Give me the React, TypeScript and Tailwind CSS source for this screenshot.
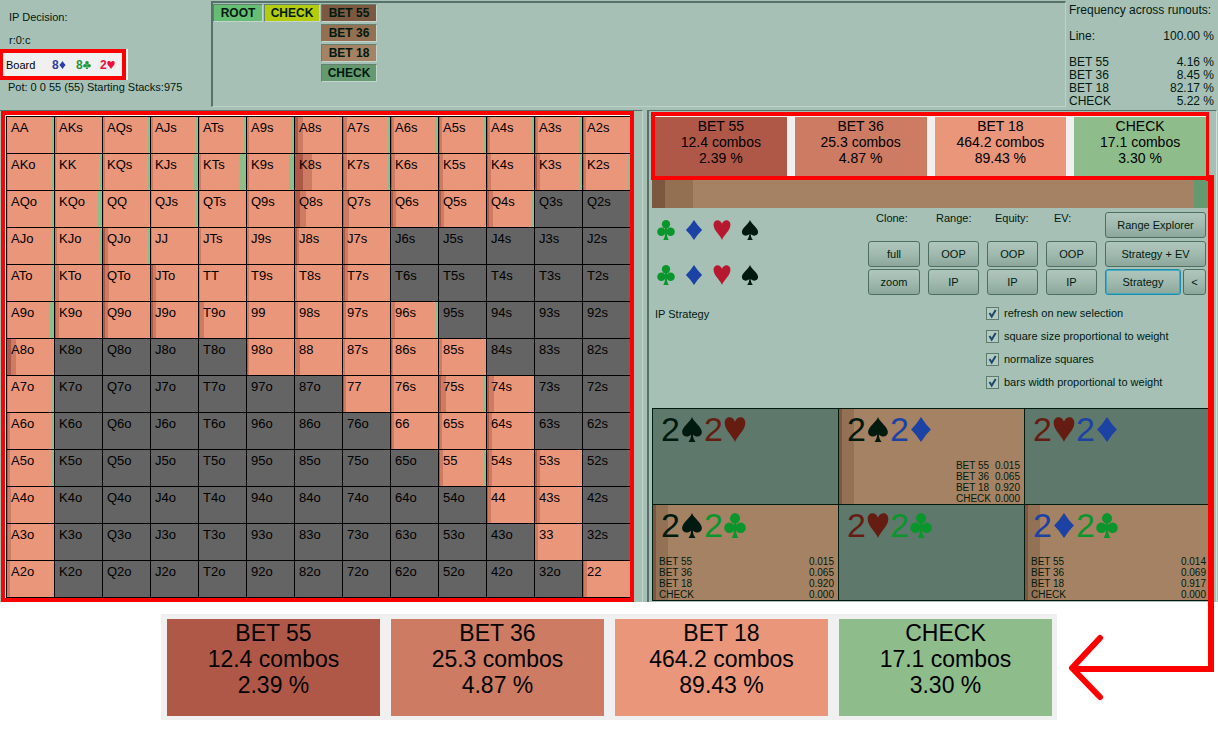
import React from "react";

type Suit = "s" | "h" | "d" | "c";
/** Bar widths in 47ths of a cell: bet 55, bet 36, check. The rest is bet 18. */
type Mix = [number, number, number];

const RANKS = ["A", "K", "Q", "J", "T", "9", "8", "7", "6", "5", "4", "3", "2"];

const MIXES: Record<string, Mix> = {
  AA: [0, 0, 2], AKs: [0, 2, 1], AQs: [0, 2, 2], AJs: [0, 2, 2], ATs: [0, 1, 2], A9s: [0, 2, 3], A8s: [3, 5, 0],
  A7s: [1, 3, 2], A6s: [1, 2, 3], A5s: [1, 2, 2], A4s: [1, 2, 2], A3s: [1, 2, 3], A2s: [1, 2, 0],
  AKo: [0, 1, 2], KK: [0, 1, 2], KQs: [0, 2, 2], KJs: [0, 2, 4], KTs: [0, 2, 6], K9s: [0, 2, 5], K8s: [8, 9, 0],
  K7s: [1, 3, 2], K6s: [1, 3, 1], K5s: [1, 3, 1], K4s: [1, 3, 0], K3s: [2, 3, 2], K2s: [1, 2, 2],
  AQo: [0, 1, 2], KQo: [0, 1, 4], QQ: [0, 1, 0], QJs: [0, 1, 2], QTs: [0, 1, 1], Q9s: [0, 2, 0], Q8s: [5, 6, 0],
  Q7s: [1, 5, 0], Q6s: [2, 3, 1], Q5s: [2, 3, 1], Q4s: [2, 4, 2],
  AJo: [0, 1, 2], KJo: [0, 2, 2], QJo: [2, 3, 2], JJ: [0, 1, 0], JTs: [0, 2, 1], J9s: [0, 2, 0], J8s: [2, 2, 0], J7s: [2, 3, 0],
  ATo: [0, 1, 2], KTo: [0, 4, 1], QTo: [2, 4, 0], JTo: [2, 3, 0], TT: [0, 1, 0], T9s: [0, 2, 1], T8s: [0, 2, 0], T7s: [2, 3, 1],
  A9o: [0, 1, 4], K9o: [1, 3, 1], Q9o: [2, 3, 0], J9o: [2, 3, 0], T9o: [1, 4, 0], "99": [0, 2, 0], "98s": [1, 2, 0],
  "97s": [1, 2, 1], "96s": [0, 4, 2],
  A8o: [4, 5, 0], "98o": [1, 1, 0], "88": [0, 5, 0], "87s": [0, 2, 0], "86s": [1, 1, 0], "85s": [0, 3, 0],
  A7o: [0, 1, 2], "77": [1, 2, 0], "76s": [1, 2, 0], "75s": [2, 5, 3], "74s": [2, 5, 1],
  A6o: [1, 2, 2], "66": [1, 2, 1], "65s": [1, 2, 1], "64s": [2, 3, 1],
  A5o: [1, 2, 2], "55": [1, 3, 2], "54s": [2, 3, 1], "53s": [2, 3, 0],
  A4o: [1, 3, 1], "44": [1, 3, 1], "43s": [2, 3, 0],
  A3o: [1, 3, 1], "33": [0, 3, 1],
  A2o: [0, 3, 1], "22": [1, 3, 0],
};

function handName(row: number, col: number) {
  if (row === col) return RANKS[row] + RANKS[row];
  return row < col ? RANKS[row] + RANKS[col] + "s" : RANKS[col] + RANKS[row] + "o";
}

function mixBackground([a, b, c]: Mix) {
  const p = (n: number) => `${((n / 47) * 100).toFixed(2)}%`;
  return `linear-gradient(to right, #b05848 ${p(a)}, #cd7b62 ${p(a)} ${p(a + b)}, #e9967a ${p(a + b)} ${p(47 - c)}, #8fbc8b ${p(47 - c)})`;
}

function SuitIcon({ suit, className }: { suit: Suit; className: string }) {
  return (
    <svg viewBox="0 0 20 22" preserveAspectRatio="none" fill="currentColor" className={className} aria-hidden="true">
      {suit === "s" && (
        <path d="M10 0C8.5 4.5 1 8.6 1 13.3c0 4 5 5.4 8.2 2.2-.1 2.8-.9 4.8-2.4 6.5h6.4c-1.5-1.7-2.3-3.7-2.4-6.5 3.200 3.200 8.200 1.800 8.200-2.200C19 8.600 11.500 4.500 10 0Z" />
      )}
      {suit === "h" && <path d="M10 22C8.500 17 .6 11.500.6 5.200.6-.8 8-1.600 10 4.200 12-1.600 19.400-.8 19.400 5.200 19.400 11.500 11.500 17 10 22Z" />}
      {suit === "d" && <path d="M10 0Q13.800 6 19 11 13.800 16 10 22 6.200 16 1 11 6.200 6 10 0Z" />}
      {suit === "c" && (
        <>
          <circle cx="10" cy="4.700" r="4.600" />
          <circle cx="4.900" cy="13" r="4.700" />
          <circle cx="15.100" cy="13" r="4.700" />
          <path d="M9 7h2l.2 5h1v2h-1.300c.1 3.300.8 5.800 2.200 8H6.900c1.400-2.200 2.100-4.700 2.200-8H7.800v-2h1Z" />
        </>
      )}
    </svg>
  );
}

const ACTIONS = [
  { name: "BET 55", combos: "12.4 combos", share: "2.39 %", color: "bg-[#b05848]" },
  { name: "BET 36", combos: "25.3 combos", share: "4.87 %", color: "bg-[#cd7b62]" },
  { name: "BET 18", combos: "464.2 combos", share: "89.43 %", color: "bg-[#e9967a]" },
  { name: "CHECK", combos: "17.1 combos", share: "3.30 %", color: "bg-[#8fbc8b]" },
];

function ActionCards({ card }: { card: string }) {
  return (
    <>
      {ACTIONS.map((a) => (
        <div key={a.name} className={`flex-1 text-center whitespace-nowrap text-black ${a.color} ${card}`}>
          <div>{a.name}</div>
          <div>{a.combos}</div>
          <div>{a.share}</div>
        </div>
      ))}
    </>
  );
}

function NodeButton({ label, color, width }: { label: string; color: string; width: string }) {
  return (
    <button
      type="button"
      className={`h-[18px] border border-t-[#64806f] border-l-[#64806f] border-r-[#c3d6cd] border-b-[#c3d6cd] text-xs leading-4 font-bold text-[#001a10] ${color} ${width}`}
    >
      {label}
    </button>
  );
}

function PushButton({ label, width, active }: { label: string; width: string; active?: boolean }) {
  return (
    <button
      type="button"
      className={`h-[26px] rounded-[3px] border bg-linear-to-b from-[#afc6bc] from-0% via-[#9fb8ad] via-55% to-[#8da69b] ${
        active ? "border-[#1b8fae] ring-1 ring-[#4aa9bd] ring-inset" : "border-[#4f6e62]"
      } ${width}`}
    >
      {label}
    </button>
  );
}

const FREQUENCIES = [
  ["Line:", "100.00 %"],
  ["BET 55", "4.16 %"],
  ["BET 36", "8.45 %"],
  ["BET 18", "82.17 %"],
  ["CHECK", "5.22 %"],
];

function Header() {
  return (
    <header className="flex h-[110px] pt-px">
      <div className="w-[211px] shrink-0 text-[11px] leading-4">
        <p className="pt-2 pl-[9px]">IP Decision:</p>
        <p className="pt-[7px] pl-[9px]">r:0:c</p>
        <div className="mt-px w-32 bg-[#f0f0f0]">
          <div className="flex h-[31px] w-[126px] items-center border-4 border-l-3 border-[#ff0000] bg-[#f0f0f0] pl-[3px] text-black">
            <span className="w-[46px]">Board</span>
            <span className="flex w-6 items-center text-xs font-bold text-[#2f3fa0]">
              8<SuitIcon suit="d" className="h-2 w-[7px]" />
            </span>
            <span className="flex w-6 items-center text-xs font-bold text-[#1c9a3c]">
              8<SuitIcon suit="c" className="h-2 w-2" />
            </span>
            <span className="flex items-center text-xs font-bold text-[#f0103c]">
              2<SuitIcon suit="h" className="h-2 w-2" />
            </span>
          </div>
        </div>
        <p className="pl-2 leading-[14px] whitespace-nowrap">Pot: 0 0 55 (55) Starting Stacks:975</p>
      </div>

      <nav className="mb-[3px] flex min-w-0 flex-1 items-start gap-px border border-t-2 border-l-2 border-t-[#56726a] border-l-[#56726a] border-r-[#bdd1c8] border-b-[#bdd1c8] pt-px">
        <NodeButton label="ROOT" color="bg-[#65be74]" width="w-[50px]" />
        <NodeButton label="CHECK" color="bg-[#b5cb0f]" width="w-14" />
        <div className="flex flex-col gap-0.5">
          <NodeButton label="BET 55" color="bg-[#7d5841]" width="w-14" />
          <NodeButton label="BET 36" color="bg-[#937052]" width="w-14" />
          <NodeButton label="BET 18" color="bg-[#a58263]" width="w-14" />
          <NodeButton label="CHECK" color="bg-[#659a70]" width="w-14" />
        </div>
      </nav>

      <table className="mt-[3px] mr-1 ml-[3px] w-[145px] shrink-0 self-start text-xs leading-[13px]">
        <caption className="pb-[13px] text-left whitespace-nowrap">Frequency across runouts:</caption>
        <tbody>
          {FREQUENCIES.map(([label, value], i) => (
            <tr key={label}>
              <th scope="row" className={`p-0 text-left font-normal ${i === 0 ? "pb-[13px]" : ""}`}>{label}</th>
              <td className={`p-0 text-right ${i === 0 ? "pb-[13px]" : ""}`}>{value}</td>
            </tr>
          ))}
        </tbody>
      </table>
    </header>
  );
}

function HandMatrix() {
  return (
    <div className="border-4 border-[#ff0000] bg-white pt-px pl-px">
      <table className="w-full table-fixed border-separate border-spacing-0 border-b border-black text-[13px] leading-4 text-black">
        <tbody>
          {RANKS.map((rank, row) => (
            <tr key={rank}>
              {RANKS.map((_, col) => {
                const hand = handName(row, col);
                const mix = MIXES[hand];
                return (
                  <td
                    key={hand}
                    className="h-[37px] border-t border-l border-black bg-[#646464] bg-origin-padding p-0 pt-[3px] pl-1 align-top"
                    style={mix ? { backgroundImage: mixBackground(mix) } : undefined}
                  >
                    {hand}
                  </td>
                );
              })}
            </tr>
          ))}
        </tbody>
      </table>
    </div>
  );
}

const SUIT_COLORS: Record<Suit, string> = {
  c: "text-[#0a962c]",
  d: "text-[#1c42a4]",
  h: "text-[#b5182f]",
  s: "text-[#001a10]",
};

const CARD_COLORS: Record<Suit, string> = { ...SUIT_COLORS, h: "text-[#651d12]" };

function SuitRow() {
  return (
    <div className="flex gap-2.5">
      {(["c", "d", "h", "s"] as Suit[]).map((s) => (
        <button key={s} type="button" aria-label={s} className={SUIT_COLORS[s]}>
          <SuitIcon suit={s} className="block h-5 w-[18px]" />
        </button>
      ))}
    </div>
  );
}

function CheckOption({ label }: { label: string }) {
  return (
    <label className="flex h-[23px] items-center gap-[5px]">
      <span className="relative flex">
        <input type="checkbox" defaultChecked className="peer size-[13px] appearance-none border border-[#5d7a6e] bg-[#b3cac0]" />
        <svg viewBox="0 0 13 13" className="pointer-events-none absolute inset-0 hidden peer-checked:block" fill="none" stroke="#1d4a6b" strokeWidth="2">
          <path d="M3.500 6 5.700 9.500 9.700 3" />
        </svg>
      </span>
      {label}
    </label>
  );
}

function CloneColumn({ title, buttons, width }: { title: string; buttons: string[]; width: string }) {
  return (
    <div className={width}>
      <div className="h-[29px] pl-2 leading-3">{title}</div>
      <div className="flex flex-col gap-0.5">
        {buttons.map((b) => (
          <PushButton key={b} label={b} width="w-full" />
        ))}
      </div>
    </div>
  );
}

function Controls() {
  return (
    <div className="ml-px flex justify-between pt-1 pr-1 pb-3.5 text-[11px]">
      <div className="pl-[3px]">
        <div className="flex flex-col gap-[25px] pt-2 pl-0.5">
          <SuitRow />
          <SuitRow />
        </div>
        <p className="pt-[21px] leading-4">IP Strategy</p>
      </div>
      <div>
        <div className="flex gap-2">
          <CloneColumn title="Clone:" buttons={["full", "zoom"]} width="w-[52px]" />
          <CloneColumn title="Range:" buttons={["OOP", "IP"]} width="w-[51px]" />
          <CloneColumn title="Equity:" buttons={["OOP", "IP"]} width="w-[51px]" />
          <CloneColumn title="EV:" buttons={["OOP", "IP"]} width="w-[51px]" />
          <div className="flex w-[101px] flex-col">
            <PushButton label="Range Explorer" width="mb-[3px] w-full" />
            <PushButton label="Strategy + EV" width="mb-0.5 w-full" />
            <div className="flex gap-0.5">
              <PushButton label="Strategy" width="w-[76px]" active />
              <PushButton label="<" width="flex-1" />
            </div>
          </div>
        </div>
        <div className="flex flex-col pt-[7px] pl-[118px]">
          <CheckOption label="refresh on new selection" />
          <CheckOption label="square size proportional to weight" />
          <CheckOption label="normalize squares" />
          <CheckOption label="bars width proportional to weight" />
        </div>
      </div>
    </div>
  );
}

const COMBOS: { suits: [Suit, Suit]; values?: string[]; compact?: boolean }[] = [
  { suits: ["s", "h"] },
  { suits: ["s", "d"], values: ["0.015", "0.065", "0.920", "0.000"], compact: true },
  { suits: ["h", "d"] },
  { suits: ["s", "c"], values: ["0.015", "0.065", "0.920", "0.000"] },
  { suits: ["h", "c"] },
  { suits: ["d", "c"], values: ["0.014", "0.069", "0.917", "0.000"] },
];

function ComboGrid() {
  return (
    <div className="ml-px grid grid-cols-3 border-b border-[#001a10]">
      {COMBOS.map(({ suits, values, compact }) => (
        <div
          key={suits.join("")}
          className={`flex h-24 flex-col justify-between border-t border-l border-[#001a10] pr-1 ${
            values
              ? "bg-[linear-gradient(to_right,#7d5841_3px,#937155_3px_15px,#a58263_15px)]"
              : "bg-[#5f786c]"
          }`}
        >
          <div className="flex items-center gap-px pt-0.5 pl-2 text-[34px] leading-9">
            {suits.map((s) => (
              <span key={s} className={`flex items-center gap-px ${CARD_COLORS[s]}`}>
                2<SuitIcon suit={s} className="h-[25px] w-[22px]" />
              </span>
            ))}
          </div>
          {values && (
            <table className={`text-[10px] leading-[11px] text-[#001a10] ${compact ? "self-end" : "ml-1.5 self-stretch"}`}>
              <tbody>
                {values.map((v, i) => (
                  <tr key={ACTIONS[i].name}>
                    <th scope="row" className="p-0 text-left font-normal">{ACTIONS[i].name}</th>
                    <td className="p-0 pl-1 text-right">{v}</td>
                  </tr>
                ))}
              </tbody>
            </table>
          )}
        </div>
      ))}
    </div>
  );
}

function CalloutArrow() {
  return (
    <svg
      className="pointer-events-none absolute top-[170px] right-0 h-[540px] w-[154px]"
      viewBox="0 0 154 540"
      fill="none"
      stroke="#ff0000"
      aria-hidden="true"
    >
      <path d="M142 8h5v491H10" strokeWidth="6" />
      <path d="M36 468 8 498l28 29" strokeWidth="6" strokeLinecap="round" strokeLinejoin="round" />
    </svg>
  );
}

export default function App() {
  return (
    <div className="relative min-h-screen bg-white font-['Liberation_Sans',Arial,sans-serif] text-[#001a10]">
      <div className="bg-[#a7c0b6]">
        <Header />
        <main className="grid grid-cols-[643fr_570fr] gap-1 pr-px">
          <section className="border-t border-r border-t-[#56726a] border-r-[#c3d6cd] pr-2 pl-px">
            <HandMatrix />
          </section>
          <section className="border-t border-r border-l-2 border-t-[#56726a] border-r-[#d3e2da] border-l-[#56726a] pt-px pr-1.5 pl-0.5">
            <div className="mr-px flex gap-2 border-4 border-r-3 border-[#ff0000] bg-[#f0f0f0] pt-px text-sm leading-4">
              <ActionCards card="h-[59px] pt-px" />
            </div>
            <div className="ml-px flex h-7 bg-[#a58263]">
              <div className="w-[13px] bg-[#7d5841]" />
              <div className="w-7 bg-[#937052]" />
              <div className="ml-auto w-4 bg-[#659a70]" />
            </div>
            <Controls />
            <ComboGrid />
          </section>
        </main>
      </div>
      <div className="mt-3 mr-[161px] ml-[161px] flex gap-[11px] bg-[#f0f0f0] pt-[5px] pr-[5px] pb-1 pl-1.5 text-[23px] leading-[26px]">
        <ActionCards card="h-[97px] pt-px" />
      </div>
      <CalloutArrow />
    </div>
  );
}
